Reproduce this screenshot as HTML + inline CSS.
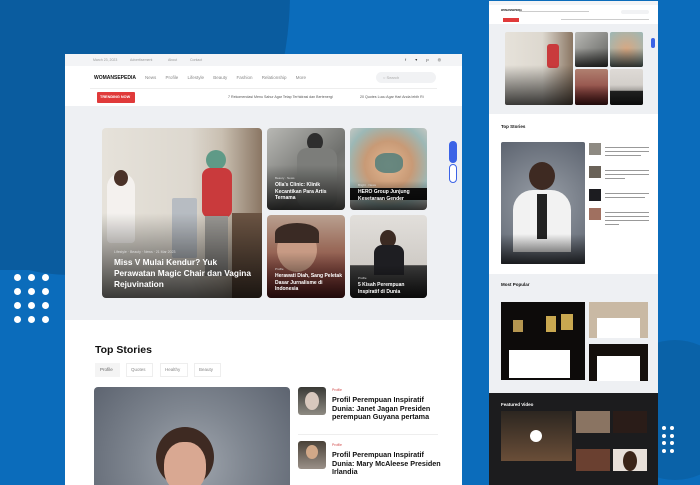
<!DOCTYPE html>
<html><head><meta charset="utf-8"><style>
*{margin:0;padding:0;box-sizing:border-box}
body{width:700px;height:485px;overflow:hidden;position:relative;background:#0b6cbb;font-family:"Liberation Sans",sans-serif}
.a{position:absolute}
.t{position:absolute;white-space:nowrap;color:#999;font-size:4px}
.w{color:#fff;font-weight:bold}
.dot{position:absolute;width:7px;height:7px;border-radius:50%;background:#fff}
.dots{position:absolute;width:4px;height:4px;border-radius:50%;background:#fff}
.img{position:absolute;border-radius:4px;overflow:hidden}
.shade{position:absolute;left:0;right:0;bottom:0;height:55%;background:linear-gradient(transparent,rgba(0,0,0,.75))}
.ln{position:absolute;height:1px;background:#999}
</style></head><body>
<div class="a" style="left:-150px;top:-290px;width:440px;height:565px;background:#0a5c9f;border-radius:50%"></div>
<div class="a" style="left:-200px;top:-100px;width:300px;height:370px;background:#0a5c9f"></div>
<div class="a" style="left:610px;top:340px;width:130px;height:140px;border-radius:50%;background:#0a62a8"></div>
<div class="dot" style="left:14px;top:274px"></div><div class="dot" style="left:28px;top:274px"></div><div class="dot" style="left:42px;top:274px"></div>
<div class="dot" style="left:14px;top:288px"></div><div class="dot" style="left:28px;top:288px"></div><div class="dot" style="left:42px;top:288px"></div>
<div class="dot" style="left:14px;top:302px"></div><div class="dot" style="left:28px;top:302px"></div><div class="dot" style="left:42px;top:302px"></div>
<div class="dot" style="left:14px;top:316px"></div><div class="dot" style="left:28px;top:316px"></div><div class="dot" style="left:42px;top:316px"></div>
<div class="dots" style="left:662px;top:426px"></div><div class="dots" style="left:670px;top:426px"></div>
<div class="dots" style="left:662px;top:434px"></div><div class="dots" style="left:670px;top:434px"></div>
<div class="dots" style="left:662px;top:441px"></div><div class="dots" style="left:670px;top:441px"></div>
<div class="dots" style="left:662px;top:449px"></div><div class="dots" style="left:670px;top:449px"></div>

<div class="a" style="left:65px;top:54px;width:397px;height:431px;background:#fff;overflow:hidden">
 <div class="a" style="left:0;top:0;width:397px;height:12px;background:#f3f4f6"></div>
 <div class="t" style="left:28px;top:4px;font-size:3.5px">March 23, 2023</div>
 <div class="t" style="left:65px;top:4px;font-size:3.5px">Advertisement</div>
 <div class="t" style="left:103px;top:4px;font-size:3.5px">About</div>
 <div class="t" style="left:125px;top:4px;font-size:3.5px">Contact</div>
 <div class="t" style="left:340px;top:3px;font-size:4px;color:#333;letter-spacing:4px">f ▾ p ◎</div>
 <div class="t" style="left:29px;top:21px;font-size:5px;color:#111;font-weight:bold">WOMANSEPEDIA</div>
 <div class="t" style="left:80px;top:21px;font-size:4.5px;color:#888;word-spacing:8px">News Profile Lifestyle Beauty Fashion Relationship More</div>
 <div class="a" style="left:311px;top:18px;width:60px;height:11px;border-radius:6px;background:#f1f2f4"></div>
 <div class="t" style="left:318px;top:21px;font-size:4px;color:#aaa">○ Search</div>
 <div class="a" style="left:25px;top:34px;width:347px;height:1px;background:#eee"></div>
 <div class="a" style="left:32px;top:38px;width:38px;height:11px;background:#e03a3a;border-radius:1px"></div>
 <div class="t" style="left:35px;top:41px;font-size:3.8px;color:#fff;font-weight:bold">TRENDING NOW</div>
 <div class="t" style="left:163px;top:41px;font-size:3.6px;color:#555">7 Rekomendasi Menu Sahur Agar Tetap Terhidrasi dan Bertenergi</div>
 <div class="t" style="left:295px;top:41px;font-size:3.6px;color:#555">20 Quotes Lucu Agar Hari Anda lebih Ri</div>
 <div class="a" style="left:0;top:52px;width:397px;height:214px;background:#eef0f3"></div>
 <div class="img" style="left:37px;top:74px;width:160px;height:170px;background:linear-gradient(90deg,#e6e2da 0%,#ddd8cf 55%,#c9bfb1 75%,#8a7663 100%)">
  <div class="a" style="left:5px;top:45px;width:28px;height:70px;border-radius:14px 14px 4px 4px;background:#f4f1ee"></div>
  <div class="a" style="left:12px;top:42px;width:14px;height:16px;border-radius:50%;background:#4a3228"></div>
  <div class="a" style="left:70px;top:70px;width:25px;height:60px;background:#b7bcc2;border-radius:2px"></div>
  <div class="a" style="left:104px;top:22px;width:20px;height:20px;border-radius:50%;background:#5f9a87"></div>
  <div class="a" style="left:100px;top:40px;width:30px;height:50px;border-radius:8px;background:#c93a3c"></div>
  <div class="a" style="left:103px;top:88px;width:23px;height:60px;background:#9a9894"></div>
  <div class="a" style="left:130px;top:85px;width:30px;height:85px;background:#6b5443"></div>
  <div class="shade" style="height:50%"></div>
  <div class="t" style="left:12px;top:122px;font-size:3.5px;color:#ddd">Lifestyle · Beauty · News · 21 Mar 2023</div>
  <div class="t w" style="left:12px;top:129px;font-size:8.3px;line-height:11px">Miss V Mulai Kendur? Yuk<br>Perawatan Magic Chair dan Vagina<br>Rejuvination</div>
 </div>
 <div class="img" style="left:202px;top:74px;width:78px;height:82px;background:linear-gradient(135deg,#b8b8b4,#6f706d 60%,#8a8a86)">
  <div class="a" style="left:40px;top:5px;width:16px;height:18px;border-radius:50%;background:#2e2e2e"></div>
  <div class="a" style="left:30px;top:20px;width:40px;height:60px;border-radius:10px;background:#7c7d7a"></div>
  <div class="shade"></div>
  <div class="t" style="left:8px;top:48px;font-size:3px;color:#ddd">Beauty · News</div>
  <div class="t w" style="left:8px;top:54px;font-size:5px;line-height:6.5px;white-space:normal;width:65px">Olla's Clinic: Klinik Kecantikan Para Artis Ternama</div>
 </div>
 <div class="img" style="left:285px;top:74px;width:77px;height:82px;background:radial-gradient(circle at 50% 45%,#e3b792 0,#c89a76 40%,#9cb8b6 70%,#d8cfc9 100%)">
  <div class="a" style="left:25px;top:25px;width:28px;height:20px;border-radius:40%;background:#4a7c7a;opacity:.8"></div>
  <div class="a" style="left:0;top:60px;width:77px;height:12px;background:#111"></div>
  <div class="shade" style="height:35%"></div>
  <div class="t" style="left:8px;top:55px;font-size:3px;color:#ddd">Bright · News</div>
  <div class="t w" style="left:8px;top:61px;font-size:5px;line-height:6.5px;white-space:normal;width:68px">HERO Group Junjung Kesetaraan Gender</div>
 </div>
 <div class="img" style="left:202px;top:161px;width:78px;height:83px;background:linear-gradient(180deg,#b9a090 0%,#9a6b5a 40%,#7d2a2a 100%)">
  <div class="a" style="left:10px;top:12px;width:40px;height:45px;border-radius:50%;background:#c79a84"></div>
  <div class="a" style="left:8px;top:8px;width:44px;height:20px;border-radius:50% 50% 0 0;background:#3a2a24"></div>
  <div class="shade"></div>
  <div class="t" style="left:8px;top:52px;font-size:3px;color:#ddd">Profile</div>
  <div class="t w" style="left:8px;top:58px;font-size:5px;line-height:6.5px;white-space:normal;width:68px">Herawati Diah, Sang Peletak Dasar Jurnalisme di Indonesia</div>
 </div>
 <div class="img" style="left:285px;top:161px;width:77px;height:83px;background:linear-gradient(180deg,#e2dfdb,#cfcbc6 60%,#3a3a3a 61%,#2a2a2a)">
  <div class="a" style="left:30px;top:15px;width:16px;height:18px;border-radius:50%;background:#3b2a22"></div>
  <div class="a" style="left:24px;top:30px;width:30px;height:30px;border-radius:8px 8px 0 0;background:#1e1e22"></div>
  <div class="shade" style="height:40%"></div>
  <div class="t" style="left:8px;top:61px;font-size:3px;color:#ddd">Profile</div>
  <div class="t w" style="left:8px;top:67px;font-size:5px;line-height:6.5px;white-space:normal;width:65px">5 Kisah Perempuan Inspiratif di Dunia</div>
 </div>
 <div class="a" style="left:384px;top:87px;width:8px;height:22px;border-radius:4px;background:#3b63e6"></div>
 <div class="a" style="left:384px;top:110px;width:8px;height:19px;border-radius:4px;background:#fff;border:1px solid #3b63e6"></div>
 <div class="t" style="left:30px;top:290px;font-size:10.5px;color:#111;font-weight:bold">Top Stories</div>
 <div class="a" style="left:30px;top:309px;width:25px;height:14px;background:#f4f4f4"></div>
 <div class="t" style="left:35px;top:313px;font-size:4.5px;color:#666">Profile</div>
 <div class="a" style="left:61px;top:309px;width:27px;height:14px;border:1px solid #eee"></div>
 <div class="t" style="left:66px;top:313px;font-size:4.5px;color:#888">Quotes</div>
 <div class="a" style="left:95px;top:309px;width:28px;height:14px;border:1px solid #eee"></div>
 <div class="t" style="left:100px;top:313px;font-size:4.5px;color:#888">Healthy</div>
 <div class="a" style="left:129px;top:309px;width:27px;height:14px;border:1px solid #eee"></div>
 <div class="t" style="left:134px;top:313px;font-size:4.5px;color:#888">Beauty</div>
 <div class="img" style="left:29px;top:333px;width:196px;height:110px;background:radial-gradient(circle at 50% 70%,#a0a6ae 0,#7f8690 45%,#5d6470 100%)">
  <div class="a" style="left:62px;top:40px;width:58px;height:60px;border-radius:50%;background:#3e2a22"></div>
  <div class="a" style="left:70px;top:55px;width:42px;height:50px;border-radius:45%;background:#d9a892"></div>
 </div>
 <div class="img" style="left:233px;top:333px;width:28px;height:28px;border-radius:3px;background:linear-gradient(#3a3a36,#8e8a82)"><div class="a" style="left:7px;top:5px;width:14px;height:18px;border-radius:50%;background:#d8c8bd"></div></div>
 <div class="t" style="left:267px;top:334px;font-size:3.5px;color:#d04848">Profile</div>
 <div class="t" style="left:267px;top:342px;font-size:7.2px;line-height:8.5px;color:#111;font-weight:bold;white-space:normal;width:115px">Profil Perempuan Inspiratif Dunia: Janet Jagan Presiden perempuan Guyana pertama</div>
 <div class="a" style="left:233px;top:380px;width:140px;height:1px;background:#eee"></div>
 <div class="img" style="left:233px;top:387px;width:28px;height:28px;border-radius:3px;background:linear-gradient(#4a4238,#9a9088)"><div class="a" style="left:8px;top:4px;width:12px;height:14px;border-radius:50%;background:#d1a888"></div></div>
 <div class="t" style="left:267px;top:389px;font-size:3.5px;color:#d04848">Profile</div>
 <div class="t" style="left:267px;top:397px;font-size:7.2px;line-height:8.5px;color:#111;font-weight:bold;white-space:normal;width:115px">Profil Perempuan Inspiratif Dunia: Mary McAleese Presiden Irlandia</div>
</div>

<div class="a" style="left:489px;top:1px;width:169px;height:484px;background:#fff;overflow:hidden">
 <div class="a" style="left:0;top:0;width:169px;height:4px;background:#f3f4f6"></div>
 <div class="t" style="left:12px;top:8px;font-size:2.5px;color:#111;font-weight:bold">WOMANSEPEDIA</div>
 <div class="ln" style="left:30px;top:10px;width:70px;background:#ccc"></div>
 <div class="a" style="left:132px;top:9px;width:28px;height:4px;border-radius:2px;background:#f1f2f4"></div>
 <div class="a" style="left:14px;top:17px;width:16px;height:4px;background:#e03a3a"></div>
 <div class="ln" style="left:72px;top:18px;width:88px;background:#ccc"></div>
 <div class="a" style="left:0;top:23px;width:169px;height:90px;background:#eef0f3"></div>
 <div class="img" style="left:16px;top:31px;width:68px;height:73px;border-radius:2px;background:linear-gradient(90deg,#e6e2da,#ddd8cf 55%,#8a7663)">
  <div class="a" style="left:42px;top:12px;width:12px;height:24px;background:#c93a3c;border-radius:3px"></div>
  <div class="shade"></div></div>
 <div class="img" style="left:86px;top:31px;width:33px;height:35px;border-radius:2px;background:linear-gradient(135deg,#b8b8b4,#5f605d)"><div class="shade"></div></div>
 <div class="img" style="left:121px;top:31px;width:33px;height:35px;border-radius:2px;background:radial-gradient(#d8a882,#9cb8b6)"><div class="shade"></div></div>
 <div class="img" style="left:86px;top:68px;width:33px;height:36px;border-radius:2px;background:linear-gradient(#b08070,#7d2a2a)"><div class="shade"></div></div>
 <div class="img" style="left:121px;top:68px;width:33px;height:36px;border-radius:2px;background:linear-gradient(#dedad6,#cfcbc6 60%,#2a2a2a 61%)"><div class="shade"></div></div>
 <div class="a" style="left:162px;top:37px;width:4px;height:10px;border-radius:2px;background:#3b63e6"></div>
 <div class="t" style="left:12px;top:123px;font-size:4.5px;color:#111;font-weight:bold">Top Stories</div>
 <div class="a" style="left:12px;top:141px;width:84px;height:122px;border-radius:2px;background:radial-gradient(circle at 50% 50%,#9aa0a8,#5d6470)">
  <div class="a" style="left:28px;top:20px;width:26px;height:28px;border-radius:50%;background:#3e2a22"></div>
  <div class="a" style="left:12px;top:48px;width:58px;height:62px;border-radius:20px 20px 0 0;background:#f2f2f2"></div>
  <div class="a" style="left:36px;top:52px;width:10px;height:45px;background:#222"></div>
  <div class="shade" style="height:25%"></div></div>
 <div class="a" style="left:100px;top:142px;width:12px;height:12px;background:#8e8a82"></div>
 <div class="a" style="left:100px;top:165px;width:12px;height:12px;background:#6a6258"></div>
 <div class="a" style="left:100px;top:188px;width:12px;height:12px;background:#1c1c20"></div>
 <div class="a" style="left:100px;top:207px;width:12px;height:12px;background:#a07060"></div>
 <div class="ln" style="left:116px;top:146px;width:44px"></div><div class="ln" style="left:116px;top:150px;width:44px"></div><div class="ln" style="left:116px;top:154px;width:36px"></div>
 <div class="ln" style="left:116px;top:169px;width:44px"></div><div class="ln" style="left:116px;top:173px;width:44px"></div><div class="ln" style="left:116px;top:177px;width:20px"></div>
 <div class="ln" style="left:116px;top:192px;width:44px"></div><div class="ln" style="left:116px;top:196px;width:40px"></div>
 <div class="ln" style="left:116px;top:211px;width:44px"></div><div class="ln" style="left:116px;top:215px;width:44px"></div><div class="ln" style="left:116px;top:219px;width:44px"></div><div class="ln" style="left:116px;top:223px;width:14px"></div>
 <div class="a" style="left:0;top:273px;width:169px;height:119px;background:#eef0f3"></div>
 <div class="t" style="left:12px;top:281px;font-size:4.5px;color:#111;font-weight:bold">Most Popular</div>
 <div class="a" style="left:12px;top:301px;width:84px;height:78px;background:#0d0b0a">
  <div class="a" style="left:12px;top:18px;width:10px;height:12px;background:#b59650"></div>
  <div class="a" style="left:45px;top:14px;width:10px;height:16px;background:#c9a850"></div>
  <div class="a" style="left:60px;top:12px;width:12px;height:16px;background:#c9a850"></div>
  <div class="a" style="left:8px;top:48px;width:61px;height:28px;background:#fff"></div></div>
 <div class="a" style="left:100px;top:301px;width:59px;height:36px;background:#c9b9a4"><div class="a" style="left:8px;top:16px;width:43px;height:20px;background:#fff"></div></div>
 <div class="a" style="left:100px;top:343px;width:59px;height:37px;background:#140f0c"><div class="a" style="left:8px;top:12px;width:43px;height:25px;background:#fff"></div></div>
 <div class="a" style="left:0;top:392px;width:169px;height:92px;background:#1c1c1e"></div>
 <div class="t" style="left:12px;top:401px;font-size:4.5px;color:#fff;font-weight:bold">Featured Video</div>
 <div class="a" style="left:12px;top:410px;width:71px;height:50px;background:linear-gradient(#2c2620,#6a4e38)"><div class="a" style="left:29px;top:19px;width:12px;height:12px;border-radius:50%;background:#fff"></div></div>
 <div class="a" style="left:87px;top:410px;width:34px;height:22px;background:#8a7462"></div>
 <div class="a" style="left:124px;top:410px;width:34px;height:22px;background:#2a1c18"></div>
 <div class="a" style="left:87px;top:448px;width:34px;height:22px;background:#6a4030"></div>
 <div class="a" style="left:124px;top:448px;width:34px;height:22px;background:#e8e0da"><div class="a" style="left:10px;top:2px;width:14px;height:20px;border-radius:50%;background:#3a2418"></div></div>
</div>
</body></html>
